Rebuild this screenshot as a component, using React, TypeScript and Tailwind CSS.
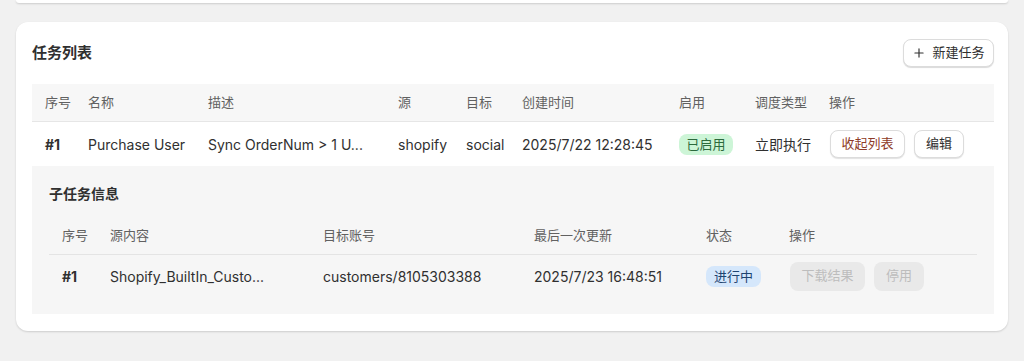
import React from 'react';
import { Plus } from 'lucide-react';

const font = { fontFamily: '"Inter", "Noto Sans CJK SC", sans-serif' };

const mainCols = 'grid grid-cols-[43px_120px_190px_68px_56px_157px_76px_74px_1fr] items-center pl-[13px]';
const subCols = 'grid grid-cols-[48px_213px_211px_172px_83px_1fr] items-center pl-[13px]';

const headers = ['序号', '名称', '描述', '源', '目标', '创建时间', '启用', '调度类型', '操作'];
const subHeaders = ['序号', '源内容', '目标账号', '最后一次更新', '状态', '操作'];

const OutlineButton = ({ children, className = '' }: { children: React.ReactNode; className?: string }) => (
  <button className={`h-7 whitespace-nowrap rounded-lg border border-[#dcdcdc] bg-white text-[13px] shadow-[0_1px_1px_rgba(0,0,0,0.12)] ${className}`}>
    {children}
  </button>
);

const DisabledButton = ({ children, className = '' }: { children: React.ReactNode; className?: string }) => (
  <button className={`h-[29px] whitespace-nowrap rounded-lg bg-[#e9e9e9] text-[13px] text-[#bdbdbd] ${className}`}>{children}</button>
);

export default function App() {
  return (
    <div className="h-[361px] overflow-hidden bg-[#f1f1f1] px-4 text-[#303030]" style={font}>
      <div className="h-[3px] rounded-b-xl bg-white shadow-[0_1px_2px_rgba(0,0,0,0.15)]" />

      <div className="mt-[19px] rounded-xl bg-white pl-4 pr-[14px] pt-[17px] pb-[17px] shadow-[0_1px_2px_rgba(0,0,0,0.15)]">
        <div className="flex items-center justify-between">
          <h2 className="text-[15px] font-semibold text-[#303030]">任务列表</h2>
          <button className="flex h-7 w-[91px] items-center justify-center gap-[6px] rounded-lg border border-[#dcdcdc] bg-white text-[13px] text-[#303030] shadow-[0_1px_1px_rgba(0,0,0,0.15)]">
            <Plus size={14} strokeWidth={2} />
            新建任务
          </button>
        </div>

        <div className="mt-[17px]">
          <div className={`${mainCols} h-[38px] border-b border-[#e6e6e6] bg-[#f7f7f7] text-[13px] text-[#616161]`}>
            {headers.map((h) => (
              <div key={h}>{h}</div>
            ))}
          </div>

          <div className={`${mainCols} h-[44px] text-[14px]`}>
            <div className="font-bold">#1</div>
            <div>Purchase User</div>
            <div>Sync OrderNum &gt; 1 U...</div>
            <div>shopify</div>
            <div>social</div>
            <div>2025/7/22 12:28:45</div>
            <div>
              <span className="inline-flex h-[21px] w-[54px] items-center justify-center rounded-lg bg-[#cdf5d7] text-[13px] text-[#2c6a3c]">
                已启用
              </span>
            </div>
            <div>立即执行</div>
            <div className="flex gap-[9px] pl-[1px]">
              <OutlineButton className="w-[75px] text-[#8e3b28]">收起列表</OutlineButton>
              <OutlineButton className="w-[50px] text-[#303030]">编辑</OutlineButton>
            </div>
          </div>

          <div className="bg-[#f6f6f6] px-[17px] pt-[17px] pb-[17px]">
            <h3 className="text-[14px] font-semibold">子任务信息</h3>
            <div className={`${subCols} mt-[13px] h-[38px] border-b border-[#e4e4e4] text-[13px] text-[#616161]`}>
              {subHeaders.map((h) => (
                <div key={h}>{h}</div>
              ))}
            </div>
            <div className={`${subCols} h-[42px] text-[14px]`}>
              <div className="font-bold">#1</div>
              <div>Shopify_BuiltIn_Custo...</div>
              <div>customers/8105303388</div>
              <div>2025/7/23 16:48:51</div>
              <div>
                <span className="inline-flex h-[21px] w-[55px] items-center justify-center rounded-lg bg-[#d5e7fb] text-[13px] text-[#1e4470]">
                  进行中
                </span>
              </div>
              <div className="flex gap-[9px] pl-[1px]">
                <DisabledButton className="w-[75px]">下载结果</DisabledButton>
                <DisabledButton className="w-[50px]">停用</DisabledButton>
              </div>
            </div>
          </div>
        </div>
      </div>
    </div>
  );
}
